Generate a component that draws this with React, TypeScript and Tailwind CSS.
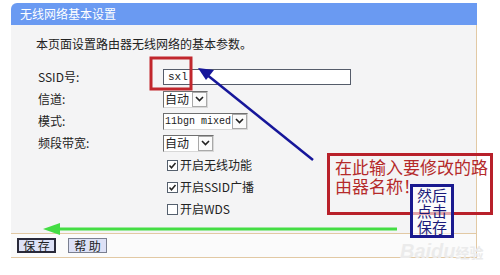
import React from "react";

const cjk = { fontFamily: '"Noto Sans CJK SC", "Liberation Sans", sans-serif' };
const mono = { fontFamily: '"Liberation Mono", "Noto Sans CJK SC", monospace' };

function Chevron() {
  return (
    <svg width="9" height="6" viewBox="0 0 9 6">
      <polyline points="1,1 4.5,4.5 8,1" fill="none" stroke="#222" strokeWidth="1.6" />
    </svg>
  );
}

function Select({ text, w, monoText }: { text: string; w: string; monoText?: boolean }) {
  return (
    <div className={`flex h-[17px] ${w} items-stretch border border-t-[#6f6f6f] border-l-[#6f6f6f] border-r-[#d8d8d8] border-b-[#d8d8d8] bg-white`}>
      <div
        className={`flex min-w-0 flex-1 items-center whitespace-nowrap pl-[1px] text-[#222] ${monoText ? "text-[10px]" : "text-[12px]"}`}
        style={monoText ? mono : cjk}
      >
        {text}
      </div>
      <div className="flex w-[15px] shrink-0 items-center justify-center border border-[#a9a9a9] bg-[#fbfbfb]">
        <Chevron />
      </div>
    </div>
  );
}

function Check({ on, children }: { on: boolean; children: React.ReactNode }) {
  return (
    <div className="flex items-center gap-[2px] pl-[4px] text-[12px] text-[#222]" style={cjk}>
      <div className="flex h-[11px] w-[11px] items-center justify-center border border-[#55606e] bg-white">
        {on && (
          <svg width="9" height="9" viewBox="0 0 9 9">
            <polyline points="1.5,4.5 3.5,6.8 7.5,2" fill="none" stroke="#222" strokeWidth="1.5" />
          </svg>
        )}
      </div>
      <span>{children}</span>
    </div>
  );
}

function Row({ label, children }: { label: string; children: React.ReactNode }) {
  return (
    <div className="flex h-[22px] items-center">
      <div className="w-[152px] shrink-0 pl-[27px] text-[12px] text-[#222]" style={cjk}>
        {label}
      </div>
      {children}
    </div>
  );
}

export default function App() {
  return (
    <div className="relative h-[275px] w-[500px] overflow-hidden bg-white" style={cjk}>
      <div className="ml-[11px] mt-[3px] w-[466px]">
        <div className="flex h-[22px] items-center rounded-tl-[6px] bg-[#6a9af2] pl-[9px] text-[12px] text-white">
          无线网络基本设置
        </div>
        <div className="h-[208px] border-r border-[#e2c9a4] bg-[#f4f4f5] pt-[11px]">
          <div className="h-[16px] pl-[25px] text-[12px] leading-[16px] text-[#222]">
            本页面设置路由器无线网络的基本参数。
          </div>
          <div className="mt-[14px] flex flex-col">
            <Row label="SSID号:">
              <div className="flex h-[16px] w-[188px] items-center border border-[#555c6a] bg-white pl-[4px] text-[11px] text-[#222]" style={mono}>
                sxl
              </div>
            </Row>
            <Row label="信道:">
              <Select text="自动" w="w-[45px]" />
            </Row>
            <Row label="模式:">
              <Select text="11bgn mixed" w="w-[85px]" monoText />
            </Row>
            <Row label="频段带宽:">
              <Select text="自动" w="w-[51px]" />
            </Row>
            <Row label="">
              <Check on>开启无线功能</Check>
            </Row>
            <Row label="">
              <Check on>开启SSID广播</Check>
            </Row>
            <Row label="">
              <Check on={false}>开启WDS</Check>
            </Row>
          </div>
        </div>
        <div className="flex h-[25px] items-center gap-[12px] border-y border-r border-[#e2c9a4] bg-[#fbfbfb] pl-[6px]">
          <button className="flex h-[15px] w-[39px] items-center justify-center whitespace-pre border-2 border-[#2a2a3a] bg-[#dde1f6] text-[12px] text-[#222]" style={cjk}>
            {"保 存"}
          </button>
          <button className="flex h-[15px] w-[39px] items-center justify-center whitespace-pre border border-[#7a7f90] bg-[#dde1f6] text-[12px] text-[#222]" style={cjk}>
            {"帮 助"}
          </button>
        </div>
      </div>

      {/* annotations */}
      <svg className="pointer-events-none absolute left-0 top-0" width="500" height="275">
        <rect x="151" y="58" width="40" height="31" fill="none" stroke="#c1272d" strokeWidth="3" />
        <line x1="313" y1="160" x2="206" y2="74" stroke="#16169a" strokeWidth="2.5" />
        <polygon points="198,68 214,70 206,80" fill="#16169a" />
        <line x1="58" y1="229" x2="397" y2="229" stroke="#44dd44" strokeWidth="3" />
        <polygon points="43,229 60,223 60,235" fill="#44dd44" />
      </svg>

      <div className="absolute left-[400px] top-[236px] text-[20px] font-bold italic text-[#ebebeb]" style={{ fontFamily: '"Liberation Sans", sans-serif' }}>
        Baidu<span className="text-[14px] not-italic" style={cjk}>经验</span>
      </div>

      <div className="absolute left-[327px] top-[153px] h-[62px] w-[166px] border-[3px] border-[#b8202a] pl-[5px] pt-[1px] text-[17px] leading-[19px] text-[#b52a2a]" style={cjk}>
        在此输入要修改的路<br />由器名称！
      </div>
      <div className="absolute left-[410px] top-[184px] flex h-[54px] w-[44px] flex-col items-center justify-center border-[3px] border-[#1a1a8f] bg-white/60 text-[15px] leading-[16px] text-[#1a1a7a]" style={cjk}>
        <span>然后</span>
        <span>点击</span>
        <span>保存</span>
      </div>
    </div>
  );
}
